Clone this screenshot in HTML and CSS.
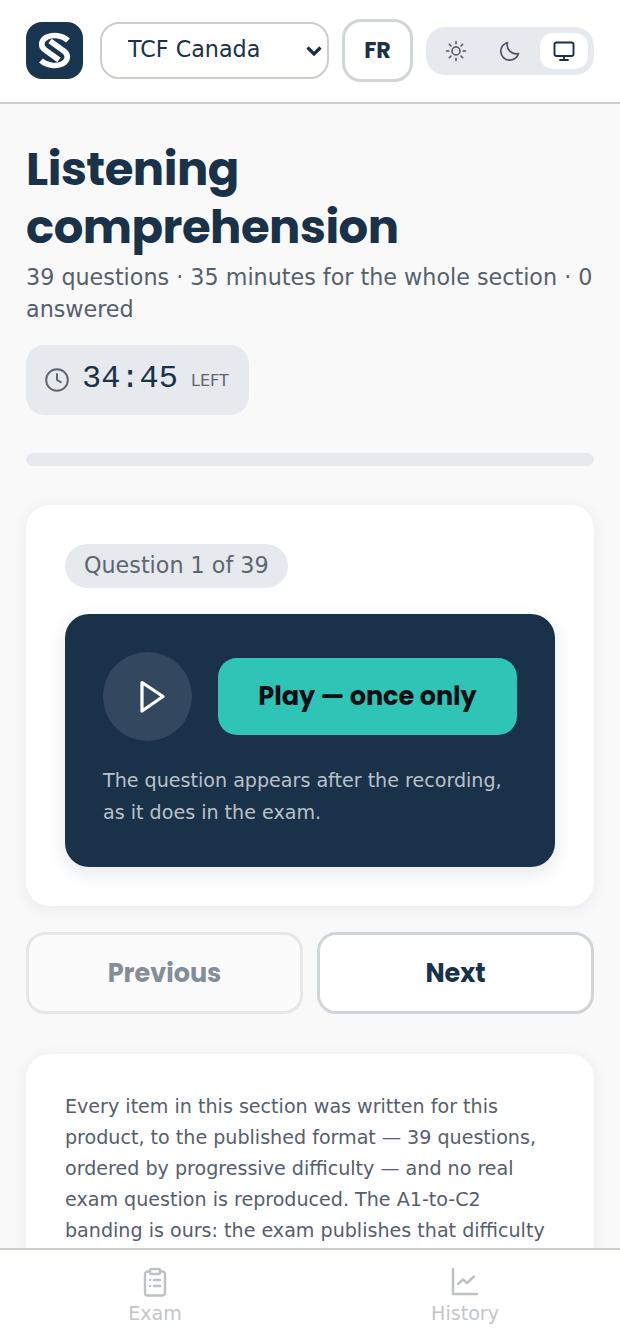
FILE: index.html
```html
<!DOCTYPE html>
<html lang="en">

<head>
    <meta charset="UTF-8">
    <title>Listening comprehension</title>
    <link rel="stylesheet" href="styles.css">
</head>

<body>
    <div class="app">
        <!-- top bar -->
        <header class="topbar">
            <div class="logo">
                <svg width="57" height="57" viewBox="0 0 57 57" fill="none" stroke="#fff" stroke-width="5.6">
                    <path d="M42 18.500 C36 13 27 12.500 21 15 C15 18 14 24 18.500 27.500 L33 38"/>
                    <path d="M15 38.500 C21 44 30 44.500 36 42 C42 39 43 33 38.500 29.500 L24 19"/>
                </svg>
            </div>
            <select class="exam_select">
                <option>TCF Canada</option>
            </select>
            <button class="lang_btn">FR</button>
            <div class="theme_group">
                <span class="theme_item">
                    <svg width="24" height="24" viewBox="0 0 24 24" fill="none" stroke="#4b5563" stroke-width="1.5" stroke-linecap="round">
                        <circle cx="12" cy="12" r="4"/>
                        <path d="M12 2.500v2.200M12 19.300v2.200M2.500 12h2.200M19.300 12h2.200M5.300 5.300l1.600 1.600M17.100 17.100l1.600 1.600M5.300 18.700l1.600-1.600M17.100 6.900l1.600-1.600"/>
                    </svg>
                </span>
                <span class="theme_item">
                    <svg width="24" height="24" viewBox="0 0 24 24" fill="none" stroke="#4b5563" stroke-width="1.7" stroke-linecap="round" stroke-linejoin="round">
                        <path d="M20.500 14.500A9 9 0 0 1 9.500 3.500a9 9 0 1 0 11 11z"/>
                    </svg>
                </span>
                <span class="theme_item active">
                    <svg width="24" height="24" viewBox="0 0 24 24" fill="none" stroke="#1a314a" stroke-width="1.9" stroke-linecap="round" stroke-linejoin="round">
                        <rect x="2.500" y="3.500" width="19" height="13.500" rx="2"/>
                        <path d="M12 17v4M8 21h8"/>
                    </svg>
                </span>
            </div>
        </header>

        <main class="content">
            <h1 class="page_title">Listening comprehension</h1>
            <p class="page_sub">39 questions · 35 minutes for the whole section · 0 answered</p>

            <div class="timer">
                <svg width="26" height="26" viewBox="0 0 24 24" fill="none" stroke="#5b6672" stroke-width="1.8" stroke-linecap="round" stroke-linejoin="round">
                    <circle cx="12" cy="12" r="10"/>
                    <path d="M12 6.500V12l3.500 2"/>
                </svg>
                <span class="timer_num">34:45</span>
                <span class="timer_left">LEFT</span>
            </div>

            <div class="progress"></div>

            <section class="card">
                <span class="chip">Question 1 of 39</span>
                <div class="player">
                    <div class="player_row">
                        <div class="play_circle">
                            <svg width="36" height="36" viewBox="0 0 36 36" fill="none" stroke="#fff" stroke-width="3.2" stroke-linejoin="round">
                                <path d="M12 3.500 L33 17.500 L12 32 Z"/>
                            </svg>
                        </div>
                        <button class="play_btn">Play — once only</button>
                    </div>
                    <p class="player_note">The question appears after the recording, as it does in the exam.</p>
                </div>
            </section>

            <div class="nav_btns">
                <button class="step_btn disabled">Previous</button>
                <button class="step_btn">Next</button>
            </div>

            <section class="card info">
                <p>Every item in this section was written for this product, to the published format — 39 questions, ordered by progressive difficulty — and no real exam question is reproduced. The A1-to-C2 banding is ours: the exam publishes that difficulty</p>
            </section>
        </main>

        <!-- bottom tabs -->
        <nav class="tabbar">
            <a class="tab" href="#">
                <svg width="32" height="32" viewBox="0 0 32 32" fill="none" stroke="#bdc1c6" stroke-width="2.400" stroke-linecap="round" stroke-linejoin="round">
                    <path d="M11 5.500H8.500a2.500 2.500 0 0 0-2.500 2.500v19a2.500 2.500 0 0 0 2.500 2.500h15a2.500 2.500 0 0 0 2.500-2.500V8a2.500 2.500 0 0 0-2.500-2.500H21"/>
                    <rect x="11" y="3" width="10" height="5" rx="1.500"/>
                    <path d="M11 14h.01M15 14h6M11 20h.01M15 20h6"/>
                </svg>
                <span class="tab_label">Exam</span>
            </a>
            <a class="tab" href="#">
                <svg width="32" height="32" viewBox="0 0 32 32" fill="none" stroke="#bdc1c6" stroke-width="2.400" stroke-linecap="round" stroke-linejoin="round">
                    <path d="M4 3v25h24"/>
                    <path d="M9 18l5-4.500 4 3.500 7-6.500"/>
                </svg>
                <span class="tab_label">History</span>
            </a>
        </nav>
    </div>
</body>

</html>
```

FILE: styles.css
```css
* {
    margin: 0;
    padding: 0;
    box-sizing: border-box;
}

body {
    background-color: #f9f9fa;
    color: #1a314a;
    font-family: "DejaVu Sans", sans-serif;
}

.app {
    height: 100vh;
    display: flex;
    flex-direction: column;
    overflow: hidden;
}

/* top bar */

.topbar {
    flex: none;
    height: 104px;
    display: flex;
    align-items: center;
    gap: 13px;
    padding: 0 26px 1px;
    background-color: #fff;
    border-bottom: 2px solid #c9ced4;
}

.logo {
    flex: none;
    width: 57px;
    height: 57px;
    margin-right: 4px;
    border-radius: 16px;
    background-color: #1a3550;
}

.logo svg {
    display: block;
}

.exam_select {
    flex: none;
    width: 229px;
    height: 57px;
    padding: 0 40px 3px 26px;
    appearance: none;
    border: 2px solid #c9ced4;
    border-radius: 19px;
    background: #fff url("data:image/svg+xml,%3Csvg xmlns='http://www.w3.org/2000/svg' width='16' height='10' viewBox='0 0 16 10' fill='none' stroke='%231a314a' stroke-width='3.200'%3E%3Cpath d='M1.500 1.500 8 8l6.500-6.500'/%3E%3C/svg%3E") no-repeat right 5px center;
    color: #1a314a;
    font-family: "DejaVu Sans", sans-serif;
    font-size: 22.25px;
}

.lang_btn {
    flex: none;
    width: 71px;
    height: 63px;
    border: 3px solid #d0d5da;
    border-radius: 19px;
    background-color: #fff;
    color: #1a314a;
    font-family: Poppins, Inter, sans-serif;
    font-size: 22.25px;
    font-weight: 700;
}

.theme_group {
    flex: none;
    width: 168px;
    height: 48px;
    display: flex;
    align-items: center;
    gap: 6px;
    padding: 6px;
    border-radius: 19px;
    background-color: #e6e9ee;
}

.theme_item {
    flex: 1;
    height: 36px;
    display: flex;
    align-items: center;
    justify-content: center;
    border-radius: 13px;
}

.theme_item.active {
    background-color: #fff;
}

/* main */

.content {
    flex: 1;
    min-height: 0;
    overflow: hidden;
    padding: 36px 26px 0;
}

.page_title {
    font-family: Poppins, Inter, sans-serif;
    font-size: 46.500px;
    font-weight: 700;
    line-height: 58px;
    letter-spacing: -0.5px;
    color: #1a314a;
}

.page_sub {
    margin-top: 5px;
    font-size: 22.25px;
    line-height: 32px;
    color: #55606c;
}

.timer {
    width: 223px;
    height: 70px;
    margin-top: 20px;
    display: flex;
    align-items: center;
    padding-left: 18px;
    border-radius: 19px;
    background-color: #e6e9ee;
}

.timer_num {
    margin-left: 12px;
    padding-bottom: 4px;
    font-family: "Liberation Mono", monospace;
    font-size: 32px;
    color: #1a314a;
}

.timer_left {
    margin-left: 13px;
    font-size: 16px;
    color: #5b6672;
}

.progress {
    height: 13px;
    margin-top: 38px;
    border-radius: 7px;
    background-color: #e6e9ee;
}

.card {
    margin-top: 39px;
    padding: 39px;
    border-radius: 24px;
    background-color: #fff;
    box-shadow: 0 3px 16px rgba(26, 49, 74, 0.07);
}

.chip {
    display: inline-block;
    height: 44px;
    padding: 0 19px;
    border-radius: 22px;
    background-color: #e6e9ee;
    font-size: 22.25px;
    line-height: 42px;
    color: #5b6672;
}

.player {
    margin-top: 26px;
    padding: 38px;
    border-radius: 24px;
    background-color: #1a314a;
    box-shadow: 0 6px 18px rgba(26, 49, 74, 0.12);
}

.player_row {
    display: flex;
    align-items: center;
    gap: 26px;
}

.play_circle {
    flex: none;
    width: 89px;
    height: 89px;
    display: flex;
    align-items: center;
    justify-content: center;
    border-radius: 50%;
    background-color: #33475e;
}

.play_btn {
    flex: 1;
    height: 77px;
    border: 0;
    border-radius: 19px;
    background-color: #2ec4b6;
    color: #0b0f14;
    font-family: Poppins, Inter, sans-serif;
    font-size: 25.500px;
    font-weight: 700;
}

.player_note {
    margin-top: 24px;
    font-size: 19.100px;
    line-height: 32px;
    color: #bac1c9;
}

.nav_btns {
    display: flex;
    gap: 14px;
    margin-top: 26px;
}

.step_btn {
    flex: 1;
    height: 82px;
    border: 3px solid #d0d5da;
    border-radius: 19px;
    background-color: #fff;
    color: #1a314a;
    font-family: Poppins, Inter, sans-serif;
    font-size: 25.500px;
    font-weight: 700;
}

.step_btn.disabled {
    border-color: #e4e6e9;
    background-color: #fbfbfc;
    color: #848e99;
}

.info {
    margin-top: 40px;
    padding-top: 37px;
    font-size: 19.100px;
    line-height: 31px;
    color: #55606c;
}

/* bottom tabs */

.tabbar {
    flex: none;
    height: 94px;
    display: flex;
    border-top: 2px solid #c9ced4;
    background-color: #fff;
}

.tab {
    flex: 1;
    display: flex;
    flex-direction: column;
    align-items: center;
    padding-top: 16px;
    text-decoration: none;
    color: #c2c6cb;
    font-size: 19.100px;
    line-height: 30px;
}

.tab_label {
    margin-top: 1px;
}
```
